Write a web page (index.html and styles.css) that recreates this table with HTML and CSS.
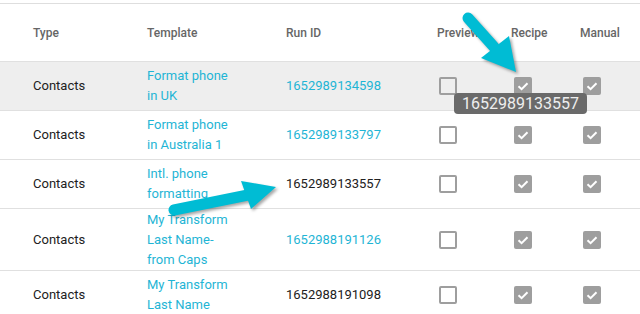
FILE: index.html
```html
<!DOCTYPE html>
<html>
<head>
<meta charset="utf-8">
<link rel="stylesheet" href="styles.css">
</head>
<body>
<div class="page">
  <div class="table">
    <div class="row head">
      <div class="c first">Type</div>
      <div class="c">Template</div>
      <div class="c">Run ID</div>
      <div class="c">Preview</div>
      <div class="c">Recipe</div>
      <div class="c">Manual</div>
    </div>
    <div class="row selected">
      <div class="c first">Contacts</div>
      <div class="c"><a class="link tpl">Format phone in UK</a></div>
      <div class="c"><a class="link">1652989134598</a></div>
      <div class="c"><span class="cb"></span></div>
      <div class="c"><span class="cb on"><svg viewBox="0 0 18 18"><path d="M4.5 9.2 L7.6 12.2 L13.5 6.3"/></svg></span></div>
      <div class="c"><span class="cb on"><svg viewBox="0 0 18 18"><path d="M4.5 9.2 L7.6 12.2 L13.5 6.3"/></svg></span></div>
    </div>
    <div class="row">
      <div class="c first">Contacts</div>
      <div class="c"><a class="link tpl">Format phone in Australia 1</a></div>
      <div class="c"><a class="link">1652989133797</a></div>
      <div class="c"><span class="cb"></span></div>
      <div class="c"><span class="cb on"><svg viewBox="0 0 18 18"><path d="M4.5 9.2 L7.6 12.2 L13.5 6.3"/></svg></span></div>
      <div class="c"><span class="cb on"><svg viewBox="0 0 18 18"><path d="M4.5 9.2 L7.6 12.2 L13.5 6.3"/></svg></span></div>
    </div>
    <div class="row">
      <div class="c first">Contacts</div>
      <div class="c"><a class="link tpl">Intl. phone formatting</a></div>
      <div class="c">1652989133557</div>
      <div class="c"><span class="cb"></span></div>
      <div class="c"><span class="cb on"><svg viewBox="0 0 18 18"><path d="M4.5 9.2 L7.6 12.2 L13.5 6.3"/></svg></span></div>
      <div class="c"><span class="cb on"><svg viewBox="0 0 18 18"><path d="M4.5 9.2 L7.6 12.2 L13.5 6.3"/></svg></span></div>
    </div>
    <div class="row tall">
      <div class="c first">Contacts</div>
      <div class="c"><a class="link tpl">My Transform Last Name-from Caps</a></div>
      <div class="c"><a class="link">1652988191126</a></div>
      <div class="c"><span class="cb"></span></div>
      <div class="c"><span class="cb on"><svg viewBox="0 0 18 18"><path d="M4.5 9.2 L7.6 12.2 L13.5 6.3"/></svg></span></div>
      <div class="c"><span class="cb on"><svg viewBox="0 0 18 18"><path d="M4.5 9.2 L7.6 12.2 L13.5 6.3"/></svg></span></div>
    </div>
    <div class="row">
      <div class="c first">Contacts</div>
      <div class="c"><a class="link tpl">My Transform Last Name</a></div>
      <div class="c">1652988191098</div>
      <div class="c"><span class="cb"></span></div>
      <div class="c"><span class="cb on"><svg viewBox="0 0 18 18"><path d="M4.5 9.2 L7.6 12.2 L13.5 6.3"/></svg></span></div>
      <div class="c"><span class="cb on"><svg viewBox="0 0 18 18"><path d="M4.5 9.2 L7.6 12.2 L13.5 6.3"/></svg></span></div>
    </div>
  </div>
  <div class="tooltip">1652989133557</div>
  <svg class="arrows" viewBox="0 0 640 314" width="640" height="314">
    <g class="arrow">
      <line x1="468" y1="18" x2="494" y2="47"/>
      <polygon points="481,58 509,36 516,72"/>
    </g>
    <g class="arrow">
      <line x1="174" y1="210" x2="248" y2="195"/>
      <polygon points="241,181 251,209 276,187"/>
    </g>
  </svg>
</div>
</body>
</html>
```

FILE: styles.css
```css
html, body {
  margin: 0;
  padding: 0;
  background: #fff;
}
.page {
  position: relative;
  width: 640px;
  height: 314px;
  overflow: hidden;
  font-family: Roboto, "Liberation Sans", sans-serif;
  font-size: 13px;
  color: #212121;
}
.table {
  margin-top: 3px;
  border-top: 1px solid #dedede;
}
.row {
  display: grid;
  grid-template-columns: 147px 139px 151px 74px 69px 1fr;
  align-items: center;
  min-height: 48px;
  border-bottom: 1px solid #e0e0e0;
  line-height: 20px;
}
.row.tall {
  min-height: 61px;
}
.row.head {
  height: 57px;
  font-size: 12px;
  font-weight: 500;
  color: #666;
}
.row.selected {
  background: #eeeeee;
}
.c.first {
  padding-left: 33px;
}
.link {
  color: #1fb5d5;
  text-decoration: none;
}
.tpl {
  display: block;
  width: 88px;
}
.cb {
  display: block;
  box-sizing: border-box;
  width: 18px;
  height: 18px;
  margin-left: 2px;
  border: 2px solid #9e9e9e;
  border-radius: 2px;
}
.cb.on {
  background: #9e9e9e;
  border: none;
  margin-left: 3px;
}
.cb svg {
  display: block;
  width: 18px;
  height: 18px;
}
.cb svg path {
  fill: none;
  stroke: #fff;
  stroke-width: 2;
}
.tooltip {
  position: absolute;
  left: 454px;
  top: 93px;
  width: 133px;
  height: 21px;
  line-height: 21px;
  border-radius: 4px;
  background: #6a6a6a;
  color: #eeeeee;
  font-size: 16px;
  text-align: center;
}
.arrows {
  position: absolute;
  left: 0;
  top: 0;
  pointer-events: none;
}
.arrow {
  filter: drop-shadow(2px 2px 1.5px rgba(0, 0, 0, 0.35));
}
.arrow line {
  stroke: #00bcd4;
  stroke-width: 11;
  stroke-linecap: round;
}
.arrow polygon {
  fill: #00bcd4;
}
```
